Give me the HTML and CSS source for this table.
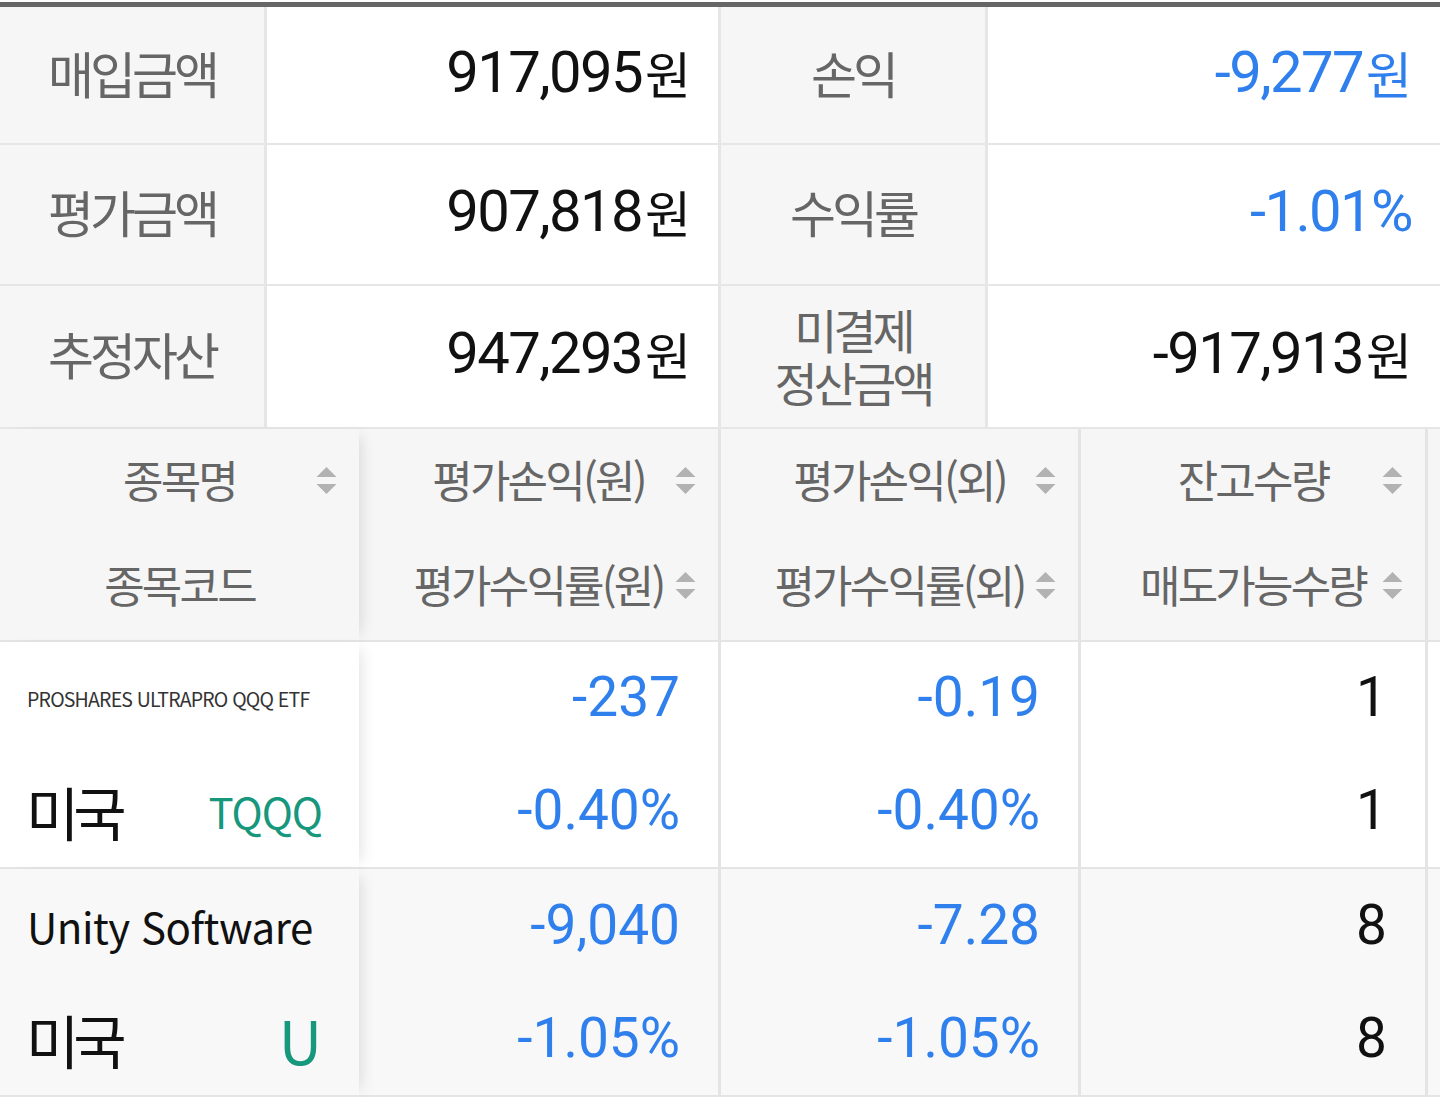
FILE: index.html
```html
<!DOCTYPE html>
<html lang="ko">
<head>
<meta charset="utf-8">
<title>잔고</title>
<link rel="stylesheet" href="styles.css">
</head>
<body>
<div class="page">
  <div class="topbar"></div>
  <div class="summary">
    <div class="s-label r1">매입금액</div>
    <div class="s-value r1">917,095<span class="unit">원</span></div>
    <div class="s-label r1">손익</div>
    <div class="s-value r1 blue last">-9,277<span class="unit">원</span></div>

    <div class="s-label r2">평가금액</div>
    <div class="s-value r2">907,818<span class="unit">원</span></div>
    <div class="s-label r2">수익률</div>
    <div class="s-value r2 blue last">-1.01%</div>

    <div class="s-label r3">추정자산</div>
    <div class="s-value r3">947,293<span class="unit">원</span></div>
    <div class="s-label r3 two"><span class="l">미결제</span><span class="l">정산금액</span></div>
    <div class="s-value r3 last">-917,913<span class="unit">원</span></div>
  </div>

  <div class="holdings">
    <!-- header -->
    <div class="h-cell first">
      <div class="h-line"><span>종목명</span><svg class="sort" viewBox="0 0 20 28"><path d="M10 0 L20 10 L0 10 Z M0 17 L20 17 L10 27 Z"/></svg></div>
      <div class="h-line"><span>종목코드</span></div>
    </div>
    <div class="h-cell">
      <div class="h-line"><span>평가손익(원)</span><svg class="sort" viewBox="0 0 20 28"><path d="M10 0 L20 10 L0 10 Z M0 17 L20 17 L10 27 Z"/></svg></div>
      <div class="h-line"><span>평가수익률(원)</span><svg class="sort" viewBox="0 0 20 28"><path d="M10 0 L20 10 L0 10 Z M0 17 L20 17 L10 27 Z"/></svg></div>
    </div>
    <div class="h-cell">
      <div class="h-line"><span>평가손익(외)</span><svg class="sort" viewBox="0 0 20 28"><path d="M10 0 L20 10 L0 10 Z M0 17 L20 17 L10 27 Z"/></svg></div>
      <div class="h-line"><span>평가수익률(외)</span><svg class="sort" viewBox="0 0 20 28"><path d="M10 0 L20 10 L0 10 Z M0 17 L20 17 L10 27 Z"/></svg></div>
    </div>
    <div class="h-cell">
      <div class="h-line"><span>잔고수량</span><svg class="sort" viewBox="0 0 20 28"><path d="M10 0 L20 10 L0 10 Z M0 17 L20 17 L10 27 Z"/></svg></div>
      <div class="h-line"><span>매도가능수량</span><svg class="sort" viewBox="0 0 20 28"><path d="M10 0 L20 10 L0 10 Z M0 17 L20 17 L10 27 Z"/></svg></div>
    </div>
    <div class="h-cell tail"></div>

    <!-- row 1 -->
    <div class="d-cell first">
      <div class="d-line name small">PROSHARES ULTRAPRO QQQ ETF</div>
      <div class="d-line market"><span class="country">미국</span><span class="ticker t4">TQQQ</span></div>
    </div>
    <div class="d-cell num blue">
      <div class="d-line">-237</div>
      <div class="d-line">-0.40%</div>
    </div>
    <div class="d-cell num blue">
      <div class="d-line">-0.19</div>
      <div class="d-line">-0.40%</div>
    </div>
    <div class="d-cell num">
      <div class="d-line">1</div>
      <div class="d-line">1</div>
    </div>
    <div class="d-cell tail"></div>

    <!-- row 2 -->
    <div class="d-cell first alt">
      <div class="d-line name">Unity Software</div>
      <div class="d-line market"><span class="country">미국</span><span class="ticker t1">U</span></div>
    </div>
    <div class="d-cell num blue alt">
      <div class="d-line">-9,040</div>
      <div class="d-line">-1.05%</div>
    </div>
    <div class="d-cell num blue alt">
      <div class="d-line">-7.28</div>
      <div class="d-line">-1.05%</div>
    </div>
    <div class="d-cell num alt">
      <div class="d-line">8</div>
      <div class="d-line">8</div>
    </div>
    <div class="d-cell tail alt"></div>
  </div>
</div>
</body>
</html>
```

FILE: styles.css
```css
html, body {
  margin: 0;
  padding: 0;
  background: #ffffff;
}

body {
  font-family: "Noto Sans CJK KR", "Noto Sans", sans-serif;
  color: #111111;
  overflow: hidden;
}

.page {
  width: 1440px;
  overflow: hidden;
}

.topbar {
  margin-top: 2px;
  height: 5px;
  background: #666666;
}

/* ---------- summary table ---------- */
.summary {
  display: grid;
  grid-template-columns: 267px 454px 267px 1fr;
  grid-template-rows: 138px 141px 143px;
}

.s-label,
.s-value {
  border-bottom: 2px solid #e6e6e6;
  border-right: 3px solid #e6e6e6;
  display: flex;
  align-items: center;
  padding-bottom: 7px;
  box-sizing: border-box;
}

.s-label {
  background: #f6f6f6;
  justify-content: center;
  color: #666666;
  font-size: 50px;
  letter-spacing: -4px;
  text-align: center;
  line-height: 52px;
}

.s-label.two {
  flex-direction: column;
  font-size: 47px;
  padding-bottom: 4px;
}

.s-label.two .l {
  display: block;
  height: 53px;
  line-height: 53px;
  overflow: visible;
}

.s-value {
  background: #ffffff;
  justify-content: flex-end;
  padding-right: 27px;
  font-family: "Roboto", "Noto Sans CJK KR", sans-serif;
  font-size: 58px;
  letter-spacing: -1.6px;
  color: #111111;
}

.s-value.last {
  border-right: none;
  padding-right: 28px;
}

.unit {
  font-family: "Noto Sans CJK KR", sans-serif;
  font-size: 50px;
  letter-spacing: 0;
  margin-left: 3px;
}

.blue {
  color: #2f80ed;
}

/* ---------- holdings table ---------- */
.holdings {
  display: grid;
  grid-template-columns: 359px 362px 360px 347px 300px;
  grid-template-rows: 213px 227px 228px;
}

.h-cell,
.d-cell {
  border-right: 3px solid #e4e4e4;
  border-bottom: 2px solid #e4e4e4;
  display: grid;
  grid-template-rows: 1fr 1fr;
}

.h-cell {
  background: #f6f6f6;
}

.d-cell {
  background: #ffffff;
}

.d-cell.alt {
  background: #f8f8f8;
}

.first {
  border-right: none;
  position: relative;
  z-index: 2;
  box-shadow: 10px 0 14px -8px rgba(0, 0, 0, 0.12);
}

.tail {
  border-right: none;
}

.h-line {
  position: relative;
  display: flex;
  align-items: center;
  justify-content: center;
  padding-bottom: 6px;
  color: #666666;
  font-size: 44px;
  letter-spacing: -2.8px;
}

.sort {
  position: absolute;
  right: 22px;
  top: 50%;
  margin-top: -15px;
  width: 21px;
  height: 28px;
  fill: #b2b2b2;
}

.d-line {
  display: flex;
  align-items: center;
}

.num .d-line {
  justify-content: flex-end;
  padding-right: 38px;
  padding-bottom: 2px;
  font-family: "Roboto", sans-serif;
  font-size: 55px;
}

.num.blue .d-line {
  color: #2f80ed;
}

.name {
  padding-left: 27px;
  font-size: 42px;
  color: #111111;
  letter-spacing: -0.5px;
}

.name.small {
  font-size: 19.5px;
  color: #333333;
  letter-spacing: -0.8px;
}

.market {
  justify-content: space-between;
  padding: 0 37px 0 26px;
}

.country {
  font-size: 58px;
  letter-spacing: -6px;
  color: #111111;
}

.ticker {
  color: #17977c;
}

.ticker.t4 {
  font-size: 42px;
  letter-spacing: -1px;
}

.ticker.t1 {
  font-size: 60px;
}
```
